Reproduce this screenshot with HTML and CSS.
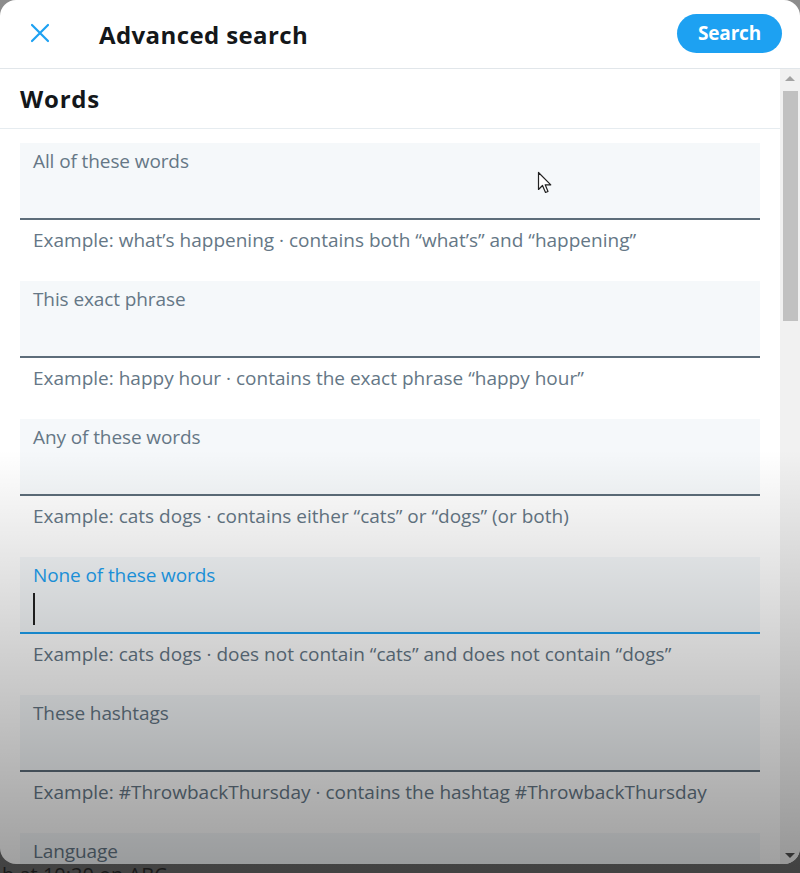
FILE: index.html
```html
<!DOCTYPE html>
<html lang="en">
<head>
<meta charset="utf-8">
<title>Advanced search</title>
<link rel="stylesheet" href="styles.css">
</head>
<body>
<div class="modal">
  <header class="modal-header">
    <button class="close" aria-label="Close">
      <svg viewBox="0 0 24 24" width="24" height="24"><path d="M4 4 L20 20 M20 4 L4 20" stroke="#1da1f2" stroke-width="2.2" stroke-linecap="round" fill="none"/></svg>
    </button>
    <h1 class="title">Advanced search</h1>
    <button class="search-btn">Search</button>
  </header>
  <div class="body">
    <div class="main">
      <h2 class="section">Words</h2>
      <div class="fields">
        <div class="group">
          <div class="field"><span class="label">All of these words</span></div>
          <p class="help">Example: what’s happening · contains both “what’s” and “happening”</p>
        </div>
        <div class="group">
          <div class="field"><span class="label">This exact phrase</span></div>
          <p class="help">Example: happy hour · contains the exact phrase “happy hour”</p>
        </div>
        <div class="group">
          <div class="field"><span class="label">Any of these words</span></div>
          <p class="help">Example: cats dogs · contains either “cats” or “dogs” (or both)</p>
        </div>
        <div class="group">
          <div class="field focused"><span class="label">None of these words</span><span class="caret"></span></div>
          <p class="help">Example: cats dogs · does not contain “cats” and does not contain “dogs”</p>
        </div>
        <div class="group">
          <div class="field"><span class="label">These hashtags</span></div>
          <p class="help">Example: #ThrowbackThursday · contains the hashtag #ThrowbackThursday</p>
        </div>
        <div class="group">
          <div class="field"><span class="label">Language</span></div>
        </div>
      </div>
    </div>
    <div class="scrollbar">
      <span class="arrow up"></span>
      <span class="thumb"></span>
      <span class="spacer"></span>
      <span class="arrow down"></span>
    </div>
  </div>
</div>
<p class="behind">h at 10:30 on ABC</p>
<svg class="cursor" width="16" height="24" viewBox="0 0 16 24"><path d="M1.5 1.5 L1.5 18.5 L5.5 14.5 L8.5 21.5 L11 20.5 L8.2 13.8 L13.8 13.8 Z" fill="#fff" stroke="#222" stroke-width="1.2" stroke-linejoin="round"/></svg>
<div class="shade"></div>
</body>
</html>
```

FILE: styles.css
```css
* { box-sizing: border-box; }
html, body { margin: 0; padding: 0; }
body {
  width: 800px;
  height: 873px;
  overflow: hidden;
  background: linear-gradient(to bottom, #8c8c8c, #6a6a6a);
  font-family: "Open Sans", "Noto Sans", sans-serif;
  position: relative;
}
.modal {
  width: 800px;
  height: 864px;
  background: #fff;
  border-radius: 16px;
  display: flex;
  flex-direction: column;
  overflow: hidden;
}
.modal-header {
  height: 69px;
  flex: none;
  display: flex;
  align-items: center;
  padding: 0 18px 0 28px;
  border-bottom: 1px solid #e1e6ea;
}
.close {
  width: 24px;
  height: 24px;
  padding: 0;
  border: 0;
  background: none;
  display: flex;
  margin-top: -2px;
}
.title {
  margin: 0 0 0 47px;
  font-size: 24px;
  font-weight: 700;
  color: #14171a;
  flex: 1;
  letter-spacing: 0.4px;
}
.search-btn {
  height: 39px;
  width: 105px;
  margin-top: -2px;
  border: 0;
  border-radius: 20px;
  background: #1da1f2;
  color: #fff;
  font-family: inherit;
  font-size: 19px;
  font-weight: 700;
  letter-spacing: -0.2px;
}
.body {
  flex: 1;
  display: flex;
  min-height: 0;
}
.main {
  width: 780px;
  flex: none;
}
.section {
  margin: 0;
  height: 60px;
  display: flex;
  align-items: center;
  padding: 0 20px;
  font-size: 24px;
  font-weight: 700;
  color: #14171a;
  border-bottom: 1px solid #e6ecf0;
  letter-spacing: 0.8px;
}
.fields {
  padding: 14px 20px 0;
  display: flex;
  flex-direction: column;
  gap: 19px;
}
.field {
  height: 77px;
  background: #f5f8fa;
  border-bottom: 2px solid #5d6d7a;
  padding: 6px 13px 0;
  display: flex;
  flex-direction: column;
  align-items: flex-start;
}
.label {
  font-size: 19px;
  line-height: 25px;
  color: #657786;
  letter-spacing: -0.1px;
}
.field.focused { border-bottom-color: #1da1f2; }
.field.focused .label { color: #1da1f2; }
.caret {
  width: 2px;
  height: 32px;
  margin-top: 5px;
  background: #222;
}
.help {
  margin: 0;
  padding: 8px 13px 0;
  height: 42px;
  font-size: 19px;
  line-height: 25px;
  color: #657786;
  letter-spacing: 0;
  white-space: nowrap;
}
.scrollbar {
  width: 20px;
  flex: none;
  background: #f1f1f1;
  display: flex;
  flex-direction: column;
  align-items: center;
  padding: 7px 0 6px;
}
.arrow {
  width: 0;
  height: 0;
  border-left: 5px solid transparent;
  border-right: 5px solid transparent;
  flex: none;
}
.arrow.up { border-bottom: 5px solid #a3a3a3; }
.arrow.down { border-top: 5px solid #505050; }
.thumb {
  width: 15px;
  height: 230px;
  margin-top: 10px;
  background: #c1c1c1;
  flex: none;
}
.spacer { flex: 1; }
.behind {
  margin: 0;
  padding-left: 2px;
  font-size: 20px;
  line-height: 22px;
  color: #2a2a2a;
}
.cursor {
  position: absolute;
  left: 537px;
  top: 171px;
}
.shade {
  position: absolute;
  inset: 0;
  pointer-events: none;
  background: linear-gradient(to bottom, rgba(0,0,0,0) 0px, rgba(0,0,0,0) 450px, rgba(0,0,0,0.38) 873px);
}
```
